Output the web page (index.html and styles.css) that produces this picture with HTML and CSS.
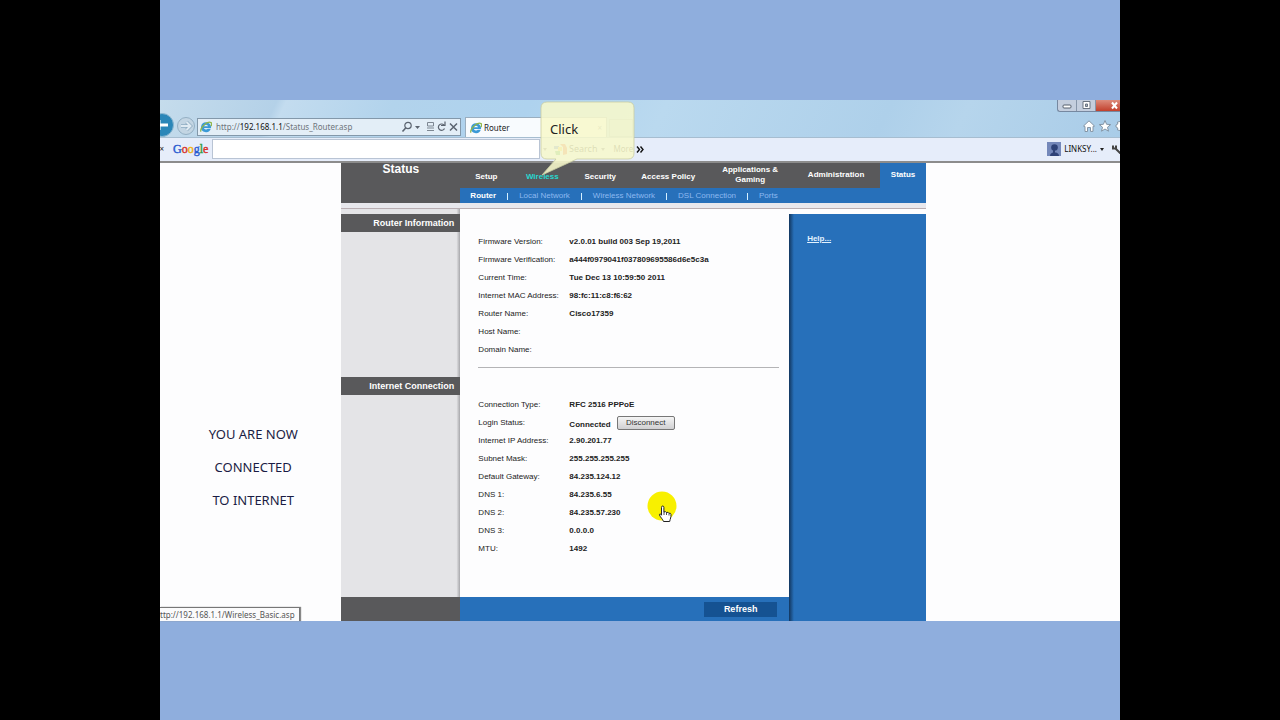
FILE: index.html
```
<!DOCTYPE html>
<html lang="en">
<head>
<meta charset="utf-8">
<title>Router status</title>
<link rel="stylesheet" href="styles.css">
</head>
<body>
<svg width="0" height="0" class="defs" aria-hidden="true">
  <symbol id="ie" viewBox="0 0 12 12">
    <path d="M6 1.200a5 5 0 1 0 4.800 6.600H7.800A2.300 2.300 0 0 1 3.900 7h7.100A5 5 0 0 0 6 1.200zM3.900 5.200a2.200 2.200 0 0 1 4.200 0z" fill="#3b9ad6"/>
    <path d="M1 10.600C-.5 7.500 7-.6 11 1.600c1 .8.600 2.400-.2 3.600" fill="none" stroke="#8fb64a" stroke-width="1.300"/>
  </symbol>
</svg>
<main class="slide">
  <section class="browser">
    <div class="controls">
      <button aria-label="Minimize"><svg viewBox="0 0 18 11" width="18" height="11"><rect x="5" y="5" width="8" height="3" rx="1" fill="#fff" stroke="#555e6c"/></svg></button>
      <button aria-label="Restore"><svg viewBox="0 0 18 11" width="18" height="11"><path d="M6 1.500h7v7H6z" fill="#fff" stroke="#6a7482"/><path d="M8.500 4h2v2.500h-2z" fill="#aab4c4" stroke="#6a7482"/></svg></button>
      <button class="close" aria-label="Close"><svg viewBox="0 0 24 11" width="24" height="11"><path d="M16 2.500l5 6M21 2.500l-5 6" stroke="#fff" stroke-width="2"/></svg></button>
    </div>
    <header class="glass">
      <button class="back" aria-label="Back"><svg viewBox="0 0 15 24" width="15" height="24"><circle cx="2" cy="12" r="11.500" fill="#2a86b8" stroke="#8db7d0"/><path d="M0 12h8" stroke="#fff" stroke-width="3"/><path d="M0 7v10" stroke="#fff"/></svg></button>
      <button class="forward" aria-label="Forward"><svg viewBox="0 0 20 20" width="20" height="20"><circle cx="10" cy="10" r="8.500" fill="#c3d5e3" stroke="#94afc3"/><path d="M5 10h9M10.500 6l4 4-4 4" fill="none" stroke="#8facc2" stroke-width="3.500"/><path d="M5 10h9M10.500 6l4 4-4 4" fill="none" stroke="#dfeaf2" stroke-width="2"/></svg></button>
      <div class="address">
        <svg width="12" height="12"><use href="#ie"/></svg>
        <span class="url">http://<b>192.168.1.1</b>/Status_Router.asp</span>
        <svg class="tools" viewBox="0 0 58 12" width="58" height="12" fill="none" stroke="#5b6470">
          <circle cx="8" cy="4.500" r="3.200" stroke-width="1.200"/><path d="M5.700 7L2.500 10.500" stroke-width="1.600"/>
          <path d="M15 5h5l-2.500 3z" fill="#5b6470" stroke="none"/>
          <path d="M27.500 1.500h6v3.500h-6zM27 7h7M27 9.500h7" stroke="#7d8792"/>
          <path d="M44.300 4.500A3.200 3.200 0 1 0 44.500 7.500M41 4.500h4v-4" stroke-width="1.200"/>
          <path d="M50 2.500l7 7M57 2.500l-7 7" stroke-width="1.500"/>
        </svg>
      </div>
      <div class="tab"><svg width="12" height="12"><use href="#ie"/></svg><span>Router</span><span class="tab-close">×</span></div>
      <button class="newtab" aria-label="New tab"></button>
      <svg class="glass-icons" viewBox="0 0 38 14" width="38" height="14" fill="#fff" stroke="#8394a5">
        <path d="M1.500 7L7 1.800 12.500 7l-1.500.4v5H8.500V8.500h-3v4H3v-5z"/>
        <path d="M23 1.500l1.600 3.800 4.100.3-3.200 2.600 1 4-3.500-2.200-3.500 2.200 1-4-3.200-2.600 4.100-.3z"/>
        <path d="M38 2.500l-2.500.5.300 2-1.800 1v2l1.800 1-.3 2 2.500.5"/>
      </svg>
    </header>
    <div class="toolbar">
      <span class="edge">×</span>
      <span class="google"><i>G</i><i>o</i><i>o</i><i>g</i><i>l</i><i>e</i></span>
      <input class="gsearch" aria-label="Google search">
      <span class="caret"></span>
      <svg class="gicon" viewBox="0 0 13 13" width="13" height="13"><path d="M0 3h5v3H0z" fill="#4a76d0"/><path d="M1 8h5v4H2z" fill="#3fa14c"/><path d="M6 1h5l2 4v6l-4 1V4z" fill="#e1552c"/><path d="M4 4h4v4H4z" fill="#f6c638"/></svg>
      <span>Search</span><span class="caret"></span>
      <span class="more">More</span>
      <svg class="chev" viewBox="0 0 8 7" width="8" height="7"><path d="M1 .5l2.500 3L1 6.500M4.500 .5l2.500 3-2.500 3" fill="none" stroke="#111" stroke-width="1.400"/></svg>
      <svg class="person" viewBox="0 0 14 14" width="14" height="14"><rect width="14" height="14" fill="#7488ba"/><circle cx="7.500" cy="5.500" r="3.300" fill="#2e4277"/><path d="M3 14c0-5 9-5 9 0zM6 8h2v3H6z" fill="#2e4277"/></svg>
      <span class="user">LINKSY...</span><span class="caret dark"></span>
      <svg class="wrench" viewBox="0 0 8 10" width="8" height="10"><path d="M1 1.500v3h3v-3M3.500 4.500L9 10" fill="none" stroke="#444" stroke-width="2"/></svg>
    </div>
    <div class="page">
      <div class="note"><p>YOU ARE NOW</p><p>CONNECTED</p><p>TO INTERNET</p></div>
      <div class="router">
        <h1 class="title">Status</h1>
        <div class="menus">
          <nav class="main-nav">
            <a href="#">Setup</a><a href="#" class="hover">Wireless</a><a href="#">Security</a><a href="#">Access Policy</a><a href="#" class="high">Applications &amp; Gaming</a><a href="#" class="high">Administration</a><a href="#" class="current">Status</a>
          </nav>
          <nav class="sub-nav">
            <a href="#" class="current">Router</a><i></i><a href="#">Local Network</a><i></i><a href="#">Wireless Network</a><i></i><a href="#">DSL Connection</a><i></i><a href="#">Ports</a>
          </nav>
        </div>
        <div class="strip"></div>
        <aside class="labels">
          <h2>Router Information</h2>
          <h2>Internet Connection</h2>
          <div class="foot"></div>
        </aside>
        <div class="content">
          <div class="info">
            <table>
              <tr><th>Firmware Version:</th><td>v2.0.01 build 003 Sep 19,2011</td></tr>
              <tr><th>Firmware Verification:</th><td>a444f0979041f037809695586d6e5c3a</td></tr>
              <tr><th>Current Time:</th><td>Tue Dec 13 10:59:50 2011</td></tr>
              <tr><th>Internet MAC Address:</th><td>98:fc:11:c8:f6:62</td></tr>
              <tr><th>Router Name:</th><td>Cisco17359</td></tr>
              <tr><th>Host Name:</th><td></td></tr>
              <tr><th>Domain Name:</th><td></td></tr>
            </table>
            <hr>
            <table>
              <tr><th>Connection Type:</th><td>RFC 2516 PPPoE</td></tr>
              <tr><th>Login Status:</th><td><div class="login"><span>Connected</span><button class="disconnect">Disconnect</button></div></td></tr>
              <tr><th>Internet IP Address:</th><td>2.90.201.77</td></tr>
              <tr><th>Subnet Mask:</th><td>255.255.255.255</td></tr>
              <tr><th>Default Gateway:</th><td>84.235.124.12</td></tr>
              <tr><th>DNS 1:</th><td>84.235.6.55</td></tr>
              <tr><th>DNS 2:</th><td>84.235.57.230</td></tr>
              <tr><th>DNS 3:</th><td>0.0.0.0</td></tr>
              <tr><th>MTU:</th><td>1492</td></tr>
            </table>
          </div>
          <div class="actions"><button class="refresh">Refresh</button></div>
        </div>
        <aside class="help"><a href="#">Help...</a></aside>
      </div>
      <div class="status-tip">ttp://192.168.1.1/Wireless_Basic.asp</div>
    </div>
    <div class="callout">
      <svg viewBox="0 0 96 76" width="96" height="76"><path d="M7 1h81q6 0 6 6v45q0 6-6 6H37L2 74l14-16H7q-6 0-6-6V7q0-6 6-6z" fill="#f7f8cc" fill-opacity=".88" stroke="#c9cda2" stroke-opacity=".8"/></svg>
      <span>Click</span>
    </div>
    <svg class="pointer" viewBox="0 0 30 32" width="30" height="32">
      <circle cx="15" cy="15" r="14.500" fill="#f8f000"/>
      <path d="M14.500 16.500q0-1.500 1.200-1.500t1.200 1.500v4.500q2-1 2.500.5 2-.8 2.400.7 2-.4 2.200 1.300c.2 3-.8 4-1.300 7h-6.200c-.8-2.500-3-4-4-6.500-.3-1.300 1-1.500 2 .2z" fill="#fff" stroke="#222"/>
      <path d="M17 21v3M19.500 21.500v2.500M22 22.500v2" stroke="#222" stroke-width=".8"/>
    </svg>
  </section>
</main>
</body>
</html>
```
FILE: styles.css
```
* { box-sizing: border-box; }
body { margin: 0; background: #000; font-family: "Liberation Sans", Arial, sans-serif; }
button { border: 0; padding: 0; margin: 0; background: none; font: inherit; color: inherit; }
button svg { display: block; }
a { color: inherit; text-decoration: none; }
.defs { position: absolute; }
.slide { width: 75%; min-height: 100vh; margin: 0 auto; padding: 100px 0 99px; background: #8faedd; overflow: hidden; }
.browser { position: relative; }
.glass, .toolbar { font-family: "Noto Sans", sans-serif; font-size: 9px; line-height: 12px; color: #222; }
.glass {
  display: flex; align-items: flex-end; height: 38px;
  background: linear-gradient(115deg, #c5dcec 0, #b4d1e8 12%, #c3dcef 13%, #b2d3ec 24%, #aed2ee 38%, #bad9ef 52%, #aed0ea 75%, #b6d5ec 83%, #a9cce8 100%);
  border-bottom: 1px solid #a6bdd0;
}
.back { margin-right: 1px; }
.forward { margin: 0 1px 1px 0; }
.address { display: flex; align-items: center; width: 264px; height: 18px; margin: 0 4px 1px 0; padding: 0 2px; background: #e3eef7; border: 1px solid #8398aa; }
.url { margin-left: 4px; color: #6e757b; font-size: 8px; }
.url b { font-weight: 400; color: #111; }
.tools { margin-left: auto; }
.tab { display: flex; align-items: center; width: 142px; height: 20px; padding: 0 4px; background: #f8fbfe; border: 1px solid #9aaebf; border-bottom: 0; }
.tab span { margin-left: 2px; font-size: 8px; }
.tab .tab-close { margin-left: auto; color: #888; }
.newtab { width: 24px; height: 18px; margin-left: 2px; background: #bdd5e6; border: 1px solid #9db4c6; }
.glass-icons { margin: 0 0 4px auto; }
.controls { position: absolute; top: 0; right: 0; display: flex; height: 12px; border: 1px solid #7688a0; border-width: 0 0 1px 1px; border-radius: 0 0 0 3px; background: #c4cede; }
.controls button { border-right: 1px solid #8796aa; }
.controls .close { border: 0; background: linear-gradient(#dd8c7c, #c2402c); }
.toolbar { display: flex; align-items: center; height: 25px; padding-bottom: 1px; background: #e6edfa; border-bottom: 2px solid #8c8c8c; }
.edge { width: 4px; overflow: hidden; direction: rtl; }
.google { width: 39px; margin-left: 9px; font: 12px "Liberation Serif", serif; -webkit-text-stroke: 0.4px; }
.google i { font-style: normal; color: #2a5bd0; }
.google i:nth-child(2) { color: #d8322b; }
.google i:nth-child(3) { color: #eeb211; }
.google i:nth-child(5) { color: #2f9b45; }
.google i:nth-child(6) { color: #d8322b; }
.gsearch { width: 328px; height: 20px; border: 1px solid #b9c4d4; background: #fff; padding: 0 4px; }
.caret { border: 2px solid transparent; border-top: 3px solid #667; border-bottom: 0; margin: 0 4px 0 3px; }
.gicon { margin: 0 2px 0 3px; }
.toolbar span { font-size: 8px; }
.toolbar .google { font-size: 12px; }
.toolbar .gicon + span { font-size: 9px; }
.more { margin-left: 5px; }
.chev { margin-left: 3px; }
.person { margin-left: auto; margin-right: 3px; }
.user { color: #111; }
.caret.dark { border-top-color: #222; margin: 0 8px 0 3px; }
.page { position: relative; display: flex; background: #fdfdfe; }
.note { width: 18.9%; padding-top: 262px; padding-left: 5px; text-align: center; font: 13px/18px "Noto Sans", sans-serif; color: #1a1c44; }
.note p { margin: 0 0 15px; }
.router { flex: 0 0 60.9%; display: grid; grid-template-columns: 119fr 329fr 137fr; grid-template-rows: 40px 11px auto; font-size: 8px; line-height: 10px; }
.title { margin: 0; background: #59595b; color: #fff; text-align: center; font-size: 12px; line-height: 12px; }
.menus { grid-column: 2 / 4; display: flex; flex-direction: column; color: #fff; }
.main-nav { display: grid; grid-template-columns: 54fr 58fr 58fr 78fr 86fr 86fr 46fr; height: 25px; background: #59595b; font-weight: 700; text-align: center; }
.main-nav a { display: grid; place-items: center; padding: 2px 8px 0 6px; }
.main-nav a.high { padding: 0 10px 1px 8px; }
.main-nav a.hover { color: #28d8cf; }
.main-nav a.current { padding: 0 0 1px; background: #2770ba; }
.sub-nav { flex: 1; display: flex; align-items: center; gap: 11px; padding: 1px 0 0 10px; background: #2770ba; color: #8db9f0; }
.sub-nav .current { color: #fff; font-weight: 700; }
.sub-nav i { width: 1px; height: 7px; background: #d5f0ff; }
.strip { grid-column: 1 / 4; background: linear-gradient(#e8e8ed 5px, #b9aeb2 5px, #b9aeb2 6px, #fdfdfe 6px); }
.labels { display: flex; flex-direction: column; margin-top: -5px; padding-top: 5px; background: linear-gradient(90deg, #e4e4e7 97%, #a7a7ab); }
.labels h2 { margin: 0 0 145px; padding-right: 6px; background: #59595b; color: #fff; font-size: 9px; line-height: 18px; text-align: right; white-space: nowrap; }
.labels .foot { height: 24px; margin-top: auto; background: #59595b; }
.content { display: flex; flex-direction: column; background: #fdfdfe; }
.info { padding: 19px 10px 39px 18px; }
table { width: 100%; border-collapse: collapse; color: #222; }
tr { height: 18px; }
th, td { padding: 0; text-align: left; font-weight: 400; white-space: nowrap; }
th { width: 91px; }
td { font-weight: 700; }
hr { height: 1px; margin: 8px 0 28px; border: 0; background: #b4b4b6; }
.login { display: flex; align-items: center; gap: 6px; }
.login span { padding-top: 3px; }
.disconnect { width: 58px; height: 14px; border: 1px solid #777; border-radius: 2px; background: linear-gradient(#f5f5f5, #d0d0d2); color: #333; font-weight: 400; }
.actions { display: flex; justify-content: flex-end; align-items: center; height: 24px; padding-right: 12px; background: #2770ba; }
.refresh { width: 73px; height: 15px; background: #155292; color: #fff; font-size: 9px; font-weight: 700; }
.help { padding: 20px 18px; background: linear-gradient(90deg, #12365e, #2770ba 5px); color: #e2f2ff; }
.help a { font-weight: 700; text-decoration: underline; }
.status-tip { position: absolute; left: 0; bottom: 0; height: 14px; padding: 0 4px 0 0; background: #fbfbfc; border: 1px solid #777; border-width: 1px 1px 0 0; box-shadow: 1px 0 1px #888; color: #555; font: 8px/13px "Noto Sans", sans-serif; }
.callout { position: absolute; left: 380px; top: 1px; }
.callout svg { display: block; }
.callout span { position: absolute; left: 10px; top: 19px; font: 13px/18px "Noto Sans", sans-serif; color: #222; }
.pointer { position: absolute; left: 487px; top: 391px; }
```
